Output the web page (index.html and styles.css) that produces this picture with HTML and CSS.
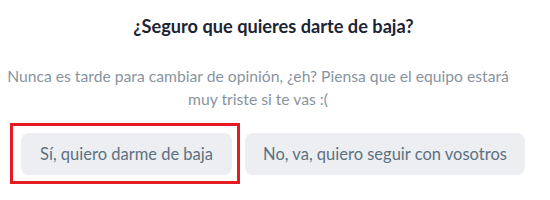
FILE: index.html
```html
<!DOCTYPE html>
<html lang="es">
<head>
<meta charset="utf-8">
<link rel="stylesheet" href="styles.css">
</head>
<body>
<div class="dialog">
  <h1 class="title">¿Seguro que quieres darte de baja?</h1>
  <p class="message">Nunca es tarde para cambiar de opinión, ¿eh? Piensa que el equipo estará muy triste si te vas :(</p>
  <div class="actions">
    <div class="highlight">
      <button class="btn btn-leave">Sí, quiero darme de baja</button>
    </div>
    <button class="btn btn-stay">No, va, quiero seguir con vosotros</button>
  </div>
</div>
</body>
</html>
```
FILE: styles.css
```css
html, body {
  margin: 0;
  padding: 0;
  background: #ffffff;
}
.dialog {
  width: 550px;
  height: 200px;
  padding-top: 15px;
  box-sizing: border-box;
  font-family: Lato, "Open Sans", sans-serif;
}
.title {
  margin: 0;
  padding-right: 3px;
  text-align: center;
  font-size: 18.2px;
  font-weight: 700;
  line-height: 22px;
  color: #1c2434;
}
.message {
  margin: 28px 0 0 5px;
  width: 506px;
  text-align: center;
  font-size: 15.7px;
  line-height: 23px;
  color: #8794a0;
}
.actions {
  display: flex;
  align-items: center;
  gap: 5px;
  margin-top: 12px;
  padding-left: 10px;
}
.highlight {
  border: 3px solid #e51b23;
  padding: 7px 5px 6px 8px;
}
.btn {
  display: block;
  height: 42px;
  border: none;
  border-radius: 8px;
  background: #eceef1;
  color: #5d7181;
  font-family: Lato, "Open Sans", sans-serif;
  font-size: 16.5px;
  padding: 0;
  text-align: center;
}
.btn-leave {
  width: 211px;
}
.btn-stay {
  width: 280px;
}
```
